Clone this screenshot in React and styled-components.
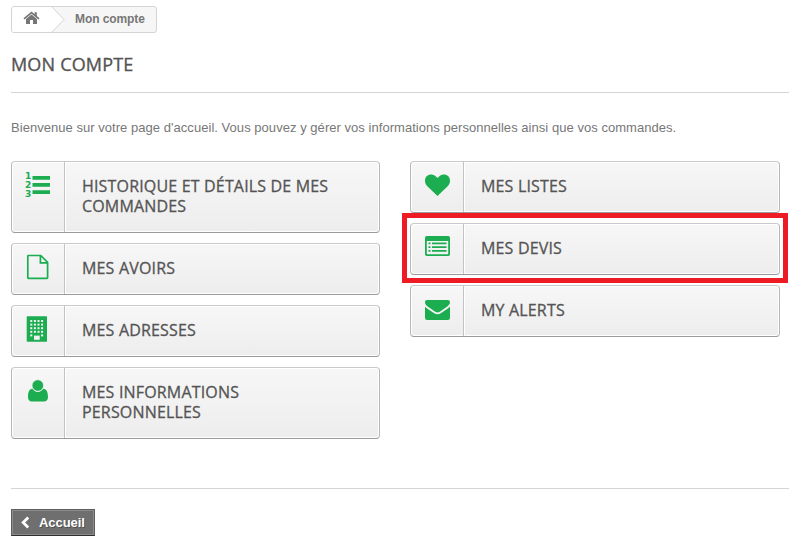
import React from 'react';
import styled, { createGlobalStyle, css } from 'styled-components';

const GlobalStyle = createGlobalStyle`
  * {
    box-sizing: border-box;
  }

  body {
    margin: 0;
    background: #fff;
    color: #777;
    font: normal 13px/18px 'Liberation Sans', Arial, sans-serif;
  }
`;

const Page = styled.main`
  height: 546px;
  padding: 6px 0 0 11px;
  overflow: hidden;
`;

const Breadcrumb = styled.nav`
  display: flex;
  width: 146px;
  height: 27px;
  border: 1px solid #d6d4d4;
  border-radius: 3px;
  overflow: hidden;
  background: #f6f6f6;
  font-size: 12px;
  font-weight: bold;
  line-height: 24px;
`;

const HomeLink = styled.a`
  display: flex;
  flex: none;
  width: 53px;
  height: 25px;
`;

const Current = styled.span`
  padding-left: 10px;
  color: #777;
  letter-spacing: -0.08px;
  white-space: nowrap;
`;

const Title = styled.h1`
  height: 40px;
  margin: 20px 0 26px;
  border-bottom: 1px solid #d6d4d4;
  color: #555454;
  font: 500 18px/22px 'Open Sans', sans-serif;
  letter-spacing: 0.18px;
  text-transform: uppercase;
  -webkit-text-stroke: 0.35px #555454;
`;

const Intro = styled.p`
  margin: 0 0 24px;
  line-height: 18px;
  letter-spacing: 0.04px;
  white-space: nowrap;
`;

const Columns = styled.div`
  display: grid;
  grid-template-columns: 369px 370px;
  gap: 30px;
  align-items: start;
  height: 327px;
`;

const LinkList = styled.ul`
  display: flex;
  flex-direction: column;
  gap: 10px;
  margin: 0;
  padding: 0;
  list-style: none;
`;

const LinkItem = styled.li`
  position: relative;

  ${({ $highlight }) =>
    $highlight &&
    css`
      &::after {
        content: '';
        position: absolute;
        inset: -10px -8px -8px;
        border: 5px solid #ed1c24;
        pointer-events: none;
      }
    `}
`;

const AccountLink = styled.a`
  display: flex;
  min-height: 52px;
  border: 1px solid;
  border-color: #cacaca #b7b7b7 #9a9a9a #b7b7b7;
  border-radius: 4px;
  background: linear-gradient(#f7f7f7, #ededed);
  box-shadow: inset 0 0 0 1px #fff;
  color: #555454;
  font: 500 16px/20px 'Open Sans', sans-serif;
  letter-spacing: 0.17px;
  text-transform: uppercase;
  text-decoration: none;
  -webkit-text-stroke: 0.3px #555454;
`;

const IconCell = styled.span`
  display: flex;
  flex: none;
  width: 53px;
  padding: 9px 0 0 13px;
  border-right: 1px solid #c3c3c3;
  color: #1bad50;
  -webkit-text-stroke: 0;
`;

const Label = styled.span`
  flex: 1;
  padding: 14px 40px 16px 16px;
  border-left: 1px solid #fff;
`;

const Footer = styled.footer`
  padding-top: 20px;
  border-top: 1px solid #d6d4d4;
`;

const BackButton = styled.a`
  display: flex;
  align-items: center;
  gap: 9px;
  width: 84px;
  height: 27px;
  padding-left: 8px;
  border: 1px solid;
  border-color: #5f5f5f #5f5f5f #2e2e2e #5f5f5f;
  background: #6f6f6f;
  box-shadow: inset 0 0 0 1px #8b8b8b;
  color: #fff;
  font-weight: bold;
  letter-spacing: -0.05px;
  text-shadow: 1px 1px rgba(0, 0, 0, 0.3);
  text-decoration: none;
`;

const Icon = ({ children }) => (
  <svg width="28" height="30" viewBox="0 0 28 30" fill="currentColor" aria-hidden="true">
    {children}
  </svg>
);

const ListOlIcon = () => (
  <Icon>
    <g fontFamily="DejaVu Sans, sans-serif" fontSize="9" fontWeight="bold" letterSpacing="0">
      <text x="0" y="8.3">1</text>
      <text x="0" y="17.3">2</text>
      <text x="0" y="26.3">3</text>
    </g>
    <path d="M7.500 5H25v3.700H7.500zM7.500 12H25v3.700H7.500zM7.500 19.300H25V23H7.500z" />
  </Icon>
);

const FileIcon = () => (
  <Icon>
    <path
      d="M3.400 2.500h12.400l6.800 6.800v15.500q0 .6-.6.6H3.400q-.6 0-.6-.6V3.100q0-.6.6-.6zM15.400 2.600v7.200h7"
      fill="none"
      stroke="currentColor"
      strokeWidth="1.700"
    />
  </Icon>
);

const windowRows = [5, 8.6, 12.2, 15.8, 19.4];

const BuildingIcon = () => (
  <Icon>
    <rect x="1.700" y="1.200" width="20.300" height="25.600" rx="0.800" />
    <g fill="#f3f3f3">
      {windowRows.map((y, row) =>
        [5.3, 8.9, 12.5, 16.1].map((x, col) =>
          row === 4 && (col === 1 || col === 2) ? null : <rect key={`${x}-${y}`} x={x} y={y} width="2" height="2" />
        )
      )}
      <rect x="9" y="20.600" width="5.700" height="4.200" />
    </g>
  </Icon>
);

const UserIcon = () => (
  <Icon>
    <path d="M7.400 11.800c1.200 1.900 3.200 3.100 5.400 3.100s4.200-1.200 5.400-3.100c3.600.2 4.800 3.800 4.800 8.500 0 2.500-1.600 4.300-3.900 4.300H6.700C4.400 24.600 3 22.800 3 20.300c0-4.700 1-8.300 4.400-8.500z" />
    <circle cx="12.800" cy="8.500" r="5.700" stroke="#f3f3f3" strokeWidth="0.600" />
  </Icon>
);

const HeartIcon = () => (
  <Icon>
    <path d="M13.500 25 4.100 16.100C2.300 14.300 1 12.400 1 9.700 1 5.700 3.500 3.400 7.300 3.400c2.300 0 4.500 1.800 6.200 3.500C15.200 5.200 17.400 3.400 19.700 3.400 23.500 3.400 26 5.700 26 9.700c0 2.700-1.300 4.600-3.100 6.400z" />
  </Icon>
);

const ListAltIcon = () => (
  <Icon>
    <path
      fillRule="evenodd"
      d="M2.800 3h21.400A1.800 1.800 0 0 1 26 4.800v16.400a1.800 1.800 0 0 1-1.800 1.800H2.800A1.800 1.800 0 0 1 1 21.200V4.800A1.800 1.800 0 0 1 2.800 3zM2.800 8v12.700q0 .6.6.6h20.200q.6 0 .6-.6V8z"
    />
    <path d="M4.500 9.500h2v1.700h-2zM4.500 13.200h2v1.700h-2zM4.500 17h2v1.700h-2zM8 9.500h14.500v1.700H8zM8 13.200h14.500v1.700H8zM8 17h14.500v1.700H8z" />
  </Icon>
);

const EnvelopeIcon = () => (
  <Icon>
    <path d="M3.200 5h20.600Q26 5 26 7.200c0 1.700-1.300 3.200-2.700 4.200l-7.200 5c-1.700 1.200-3.500 1.200-5.200 0l-7.200-5C2.400 10.500 1 8.900 1 7.200 1 5.900 1.900 5 3.200 5z" />
    <path d="M1 11.700c2.700 2.300 6 4.200 8.800 6.300 2.500 1.800 4.900 1.800 7.400 0 2.800-2.100 6.100-4 8.800-6.300v11.100q0 2.200-2.200 2.200H3.200Q1 25 1 22.800z" />
  </Icon>
);

const orderLinks = [
  { label: 'Historique et détails de mes commandes', icon: ListOlIcon },
  { label: 'Mes avoirs', icon: FileIcon },
  { label: 'Mes adresses', icon: BuildingIcon },
  { label: 'Mes informations personnelles', icon: UserIcon },
];

const moduleLinks = [
  { label: 'Mes listes', icon: HeartIcon },
  { label: 'Mes devis', icon: ListAltIcon, highlight: true },
  { label: 'My alerts', icon: EnvelopeIcon },
];

const AccountLinks = ({ links }) => (
  <LinkList>
    {links.map(({ label, icon: LinkIcon, highlight }) => (
      <LinkItem key={label} $highlight={highlight}>
        <AccountLink href="#">
          <IconCell>
            <LinkIcon />
          </IconCell>
          <Label>{label}</Label>
        </AccountLink>
      </LinkItem>
    ))}
  </LinkList>
);

function App() {
  return (
    <>
      <GlobalStyle />
      <Page>
        <Breadcrumb>
          <HomeLink href="#" aria-label="Accueil">
            <svg width="53" height="25" viewBox="0 0 53 25">
              <path d="M0 0H40L52 12.5 40 25H0z" fill="#fff" />
              <path d="M40 0 52 12.5 40 25" fill="none" stroke="#d6d4d4" />
              <path d="M19.500 7.500 25 12v5h-4v-4h-3v4h-4v-5z" fill="#777" />
              <path d="M12 11.900 19.500 5.700l7.500 6.200" fill="none" stroke="#777" strokeWidth="1.700" />
              <path d="M22.600 5.200h2.200v5l-2.200-1.800z" fill="#777" />
            </svg>
          </HomeLink>
          <Current>Mon compte</Current>
        </Breadcrumb>

        <Title>Mon compte</Title>
        <Intro>
          Bienvenue sur votre page d'accueil. Vous pouvez y gérer vos informations personnelles ainsi que vos commandes.
        </Intro>

        <Columns>
          <AccountLinks links={orderLinks} />
          <AccountLinks links={moduleLinks} />
        </Columns>

        <Footer>
          <BackButton href="#">
            <svg width="10" height="13" viewBox="0 0 10 13">
              <path d="M8.200 1.500 3.200 6.500l5 5" fill="none" stroke="#fff" strokeWidth="2.800" />
            </svg>
            Accueil
          </BackButton>
        </Footer>
      </Page>
    </>
  );
}

export default App;
